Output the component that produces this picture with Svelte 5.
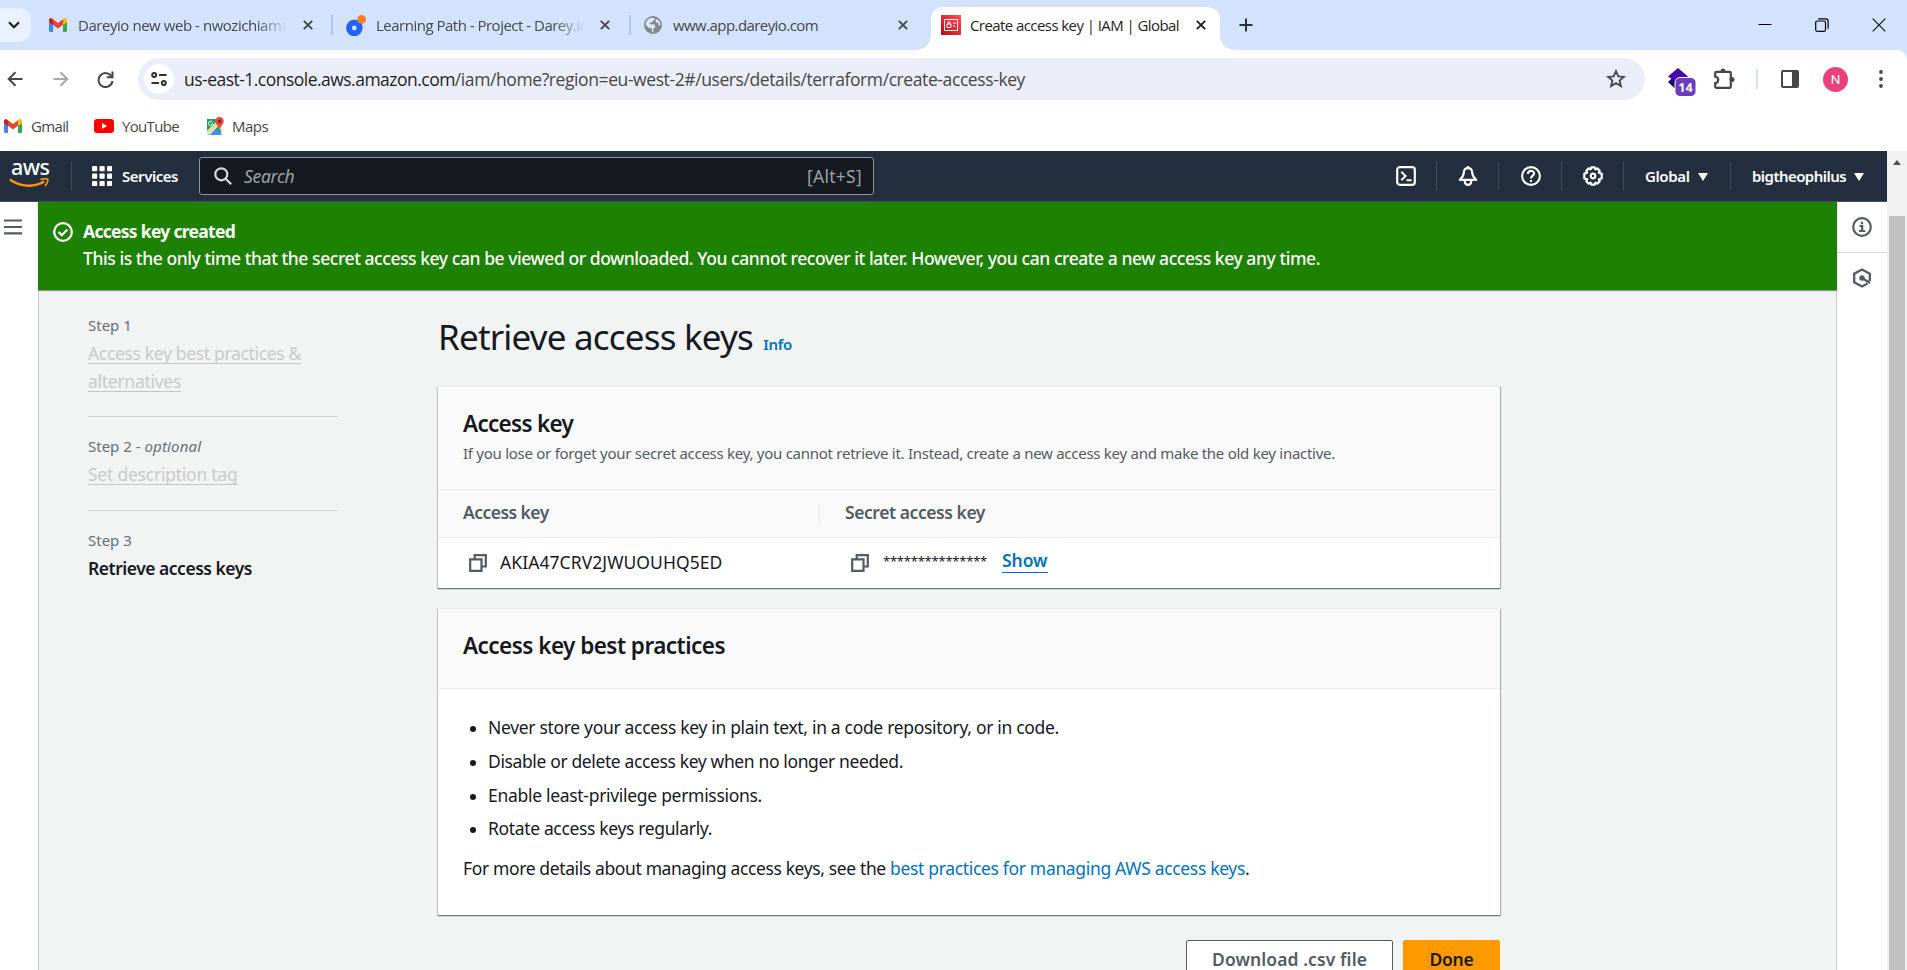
<script>
  const tabs = [
    { icon: 'gmail', title: 'Dareyio new web - nwozichiamaka', ls: -0.45, fade: true },
    { icon: 'darey', title: 'Learning Path - Project - Darey.io', ls: -0.5, fade: true },
    { icon: 'globe', title: 'www.app.dareyio.com', ls: -0.57, fade: false }
  ];
  const tips = [
    { text: 'Never store your access key in plain text, in a code repository, or in code.', ls: -0.32 },
    { text: 'Disable or delete access key when no longer needed.', ls: -0.376 },
    { text: 'Enable least-privilege permissions.', ls: -0.302 },
    { text: 'Rotate access keys regularly.', ls: -0.351 }
  ];
</script>

{#snippet gmail()}
  <svg width="18" height="14" viewBox="0 0 18 14">
    <path d="M0 2v10.8C0 13.500.500 14 1.200 14H4V6z" fill="#4285f4" />
    <path d="M18 2v10.800c0 .700-.500 1.200-1.200 1.200H14V6z" fill="#34a853" />
    <path d="M4 1.200v5.600l5 3.800 5-3.800V1.200L9 5z" fill="#ea4335" />
    <path d="M0 2v2l4 3V1.200L2.900.4C1.700-.5 0 .400 0 2z" fill="#c5221f" />
    <path d="M18 2v2l-4 3V1.200l1.100-.8C16.300-.500 18 .400 18 2z" fill="#fbbc04" />
  </svg>
{/snippet}

{#snippet cross()}
  <svg class="cross" width="10" height="10" viewBox="0 0 10 10"><path d="M.8.800l8.400 8.400M9.200.800L.8 9.200" fill="none" stroke="currentColor" stroke-width="1.900" /></svg>
{/snippet}

{#snippet copy()}
  <svg width="18" height="18" viewBox="0 0 18 18" fill="none" stroke="#545b64" stroke-width="2.200"><path d="M1.200 5.300h11.300v11.500H1.200z" /><path d="M5.700 5V1.200h11.100v11.300h-4" /></svg>
{/snippet}

<div class="window">
  <div class="tabstrip">
    <div class="tabsearch">
      <svg width="12" height="8" viewBox="0 0 12 8"><path d="M1 1.200l5 5 5-5" fill="none" stroke="#1f1f1f" stroke-width="2.200" /></svg>
    </div>
    {#each tabs as t}
      <div class="tab {t.icon}">
        <span class="fav">
          {#if t.icon === 'gmail'}{@render gmail()}
          {:else if t.icon === 'darey'}
            <svg width="20" height="21" viewBox="0 0 20 21"><circle cx="8.300" cy="13" r="5.300" fill="none" stroke="#1f62f5" stroke-width="5.800" /><path d="M11.500 4.800l4.700-.8v9h-4.700z" fill="#1f62f5" /><circle cx="15.600" cy="4.400" r="4.400" fill="#fd7e23" /></svg>
          {:else}
            <svg width="18" height="18" viewBox="0 0 18 18"><circle cx="9" cy="9" r="9" fill="#84878b" /><path d="M8 1.800c-3.600.4-6.300 3.300-6.300 7l3.500 3.400H8v3.700c.5.300 1 .3 1.500.3l-.2-3.400 2.200-1.700-1-2.500-4.700-.4V6.500h2.400l1-2.200 1.800-.8V2.200zM12.500 3l-1.300 1.800 1.500 2h1.600l.5 3 1.700-.8c0-2.600-1.500-4.900-4-6z" fill="#dce7fb" /></svg>
          {/if}
        </span>
        <span class="title" class:fade={t.fade} style:letter-spacing="{t.ls}px">{t.title}</span>
        {@render cross()}
      </div>
    {/each}
    <div class="tab active">
      <span class="fav">
        <svg width="20" height="20" viewBox="0 0 20 20"><defs><linearGradient id="iam" x1="0" y1="1" x2="1" y2="0"><stop offset="0" stop-color="#bd0816" /><stop offset="1" stop-color="#ff5252" /></linearGradient></defs><path d="M0 0h20v20H0z" fill="url(#iam)" /><g fill="none" stroke="#fff"><path d="M3.500 4.500h13v11h-13z" /><path d="M6 9h4v3.500H6zM7 9V7h2v2M12 8h3M12 11h2" /></g></svg>
      </span>
      <span class="title">Create access key | IAM | Global</span>
      {@render cross()}
    </div>
    <svg class="plus" width="14" height="14" viewBox="0 0 14 14"><path d="M7 .5v13M.5 7h13" stroke="#303134" stroke-width="2" /></svg>
    <div class="winctl">
      <svg width="14" height="14" viewBox="0 0 14 14"><path d="M.5 6.500h13" stroke="#000" /></svg>
      <svg width="14" height="14" viewBox="0 0 14 14" fill="none" stroke="#000" stroke-width="1.200"><rect x=".7" y="3" width="9.800" height="10.300" rx="1.500" /><path d="M3.200.8h7.500c1.500 0 2.400.9 2.400 2.400v7.500" /></svg>
      <svg width="14" height="14" viewBox="0 0 14 14"><path d="M.7.700l12.600 12.600M13.300.7L.7 13.300" stroke="#111" stroke-width="1.200" /></svg>
    </div>
  </div>

  <div class="toolbarwrap">
    <div class="toolbar">
      <svg width="16" height="16" viewBox="0 0 16 16" fill="none" stroke="#474747" stroke-width="2"><path d="M15.500 8H2M8.500 1.200L1.700 8l6.800 6.800" /></svg>
      <svg class="fwd" width="16" height="16" viewBox="0 0 16 16" fill="none" stroke="#a9a9a9" stroke-width="2"><path d="M.5 8H14M7.500 1.200L14.300 8l-6.800 6.800" /></svg>
      <svg class="reload" width="17" height="17" viewBox="0 0 17 17" fill="none" stroke="#474747" stroke-width="2"><path d="M14.700 5.700A7 7 0 1 0 15.500 10" /><path d="M15.500.5v5.700H9.800" /></svg>
      <div class="omnibox">
        <span class="site"><svg width="16" height="14" viewBox="0 0 16 14" fill="none" stroke="#303134" stroke-width="2"><circle cx="3.200" cy="3" r="2" /><path d="M8 3h7.500M.5 11H8" /><circle cx="12.800" cy="11" r="2" /></svg></span>
        <span class="url"><b>us-east-1.console.aws.amazon.com</b>/iam/home?region=eu-west-2#/users/details/terraform/create-access-key</span>
        <svg class="star" width="20" height="20" viewBox="0 0 20 20"><path d="M10 2.200l2.300 5.200 5.600.5-4.300 3.700 1.300 5.500-4.900-2.900-4.900 2.900 1.300-5.500L2.100 7.900l5.600-.5z" fill="none" stroke="#474747" stroke-width="1.900" /></svg>
      </div>
      <svg class="ext" width="30" height="30" viewBox="0 0 30 30"><path d="M0 14l9-8.500 9 8.500-9 8.500z" fill="#1e0a66" /><path d="M0 8.500L10 0l10 8.500L10 15z" fill="#4c05ad" /><rect x="7" y="9.500" width="21" height="19" rx="5" fill="#6c3bc0" stroke="#fff" /><text x="17.500" y="24" text-anchor="middle" font-family="Open Sans" font-size="12.500" font-weight="700" fill="#fff">14</text></svg>
      <svg class="puzzle" width="22" height="22" viewBox="0 0 22 22"><path d="M2.200 4.800c0-.6.400-1 1-1h13.600c.6 0 1 .4 1 1v14c0 .6-.4 1-1 1H3.200c-.6 0-1-.4-1-1v-3.600c2-.4 3-1.600 3-3.300s-1-3-3-3.400z" fill="none" stroke="#474747" stroke-width="2.200" /><circle cx="10" cy="2.800" r="2.400" fill="#474747" /><circle cx="19" cy="11.500" r="2.500" fill="#474747" /></svg>
      <i class="vsep"></i>
      <svg class="panel" width="18" height="18" viewBox="0 0 18 18"><rect x="1" y="1" width="16" height="16" rx="1" fill="none" stroke="#474747" stroke-width="2" /><path d="M11 1h6v16h-6z" fill="#474747" /></svg>
      <span class="avatar">N</span>
      <svg class="dots" width="4" height="18" viewBox="0 0 4 18" fill="#474747"><circle cx="2" cy="2" r="1.900" /><circle cx="2" cy="9" r="1.900" /><circle cx="2" cy="16" r="1.900" /></svg>
    </div>
  </div>

  <div class="bookmarks">
    {@render gmail()}<span class="b1">Gmail</span>
    <svg width="20" height="14" viewBox="0 0 20 14"><rect width="20" height="14" rx="3.300" fill="#f00" /><path d="M8 4l5.200 3L8 10z" fill="#fff" /></svg><span class="b2">YouTube</span>
    <svg width="20" height="18" viewBox="0 0 20 18"><path d="M2 2h14v14H2z" fill="#1fa463" /><path d="M9 9l8 9H2z" fill="#4b8df8" /><path d="M2 14L14 2l3 3L5 17.500H2z" fill="#fff" opacity=".85" /><path d="M2 15.500L14 4l1 2-12 11z" fill="#fddb4c" /><path d="M12 8l5 8V6z" fill="#d5d9dd" /><path d="M14.500 0a4.200 4.200 0 0 0-4.200 4.200c0 3 3 4 4.200 8.200 1.200-4.200 4.200-5.200 4.200-8.200A4.200 4.200 0 0 0 14.500 0z" fill="#e8453c" /><circle cx="14.500" cy="4.300" r="1.500" fill="#801f1a" /><path d="M7.500 5.300A2.200 2.200 0 1 0 7.800 7H6" stroke="#fff" fill="none" /></svg><span class="b3">Maps</span>
  </div>

  <div class="page">
    <div class="view">
      <header class="aws">
        <div class="logo"><span>aws</span><svg width="41" height="11" viewBox="0 0 41 11"><path d="M.8 1.500c11 7.600 24 8.100 34.500 2" fill="none" stroke="#f90" stroke-width="2.400" /><path d="M31.500 1.700c2.500-.9 6-1.200 7.200-.5.500 1.500-.8 4.500-2.500 6.800" fill="none" stroke="#f90" stroke-width="1.700" /></svg></div>
        <i></i>
        <svg class="grid" width="20" height="20" viewBox="0 0 20 20" fill="#fff">{#each [0, 7.500, 15] as gy}{#each [0, 7.500, 15] as gx}<rect x={gx} y={gy} width="5.200" height="5.200" rx="1" />{/each}{/each}</svg>
        <span class="services">Services</span>
        <div class="search">
          <svg width="18" height="18" viewBox="0 0 18 18" fill="none" stroke="#d5dbdb" stroke-width="2.200"><circle cx="7.300" cy="7.300" r="6" /><path d="M11.700 11.700l5.500 5.500" /></svg>
          <em>Search</em><span>[Alt+S]</span>
        </div>
        <div class="tools">
          <svg width="20" height="20" viewBox="0 0 20 20" fill="none" stroke="#fff" stroke-width="2.200"><rect x="1.200" y="1.200" width="17.600" height="17.600" rx="2.500" /><path d="M5.300 5.800L9.500 10l-4.200 4.200M10.500 14.300h5" stroke-width="2" /></svg>
          <i></i>
          <svg width="20" height="20" viewBox="0 0 20 20" fill="none" stroke="#fff" stroke-width="2.200"><path d="M10 2.200C7.200 2.200 6 4 5.800 6.500 5.600 10 4.800 11.300 1.700 13.800h16.600c-3.100-2.500-3.900-3.800-4.100-7.300C14 4 12.800 2.200 10 2.200z" stroke-linejoin="round" /><path d="M10 0v2" /><path d="M6.800 14.500c0 5.900 6.400 5.900 6.400 0" /></svg>
          <i></i>
          <svg width="20" height="20" viewBox="0 0 20 20" fill="none" stroke="#fff" stroke-width="2.100"><circle cx="10" cy="10" r="8.900" /><path d="M6.900 8c0-4.100 6.200-4.100 6.200-.5 0 2-3.100 2.300-3.100 5" /><path d="M10 14v2" /></svg>
          <i></i>
          <svg width="20" height="20" viewBox="0 0 20 20" fill="none" stroke="#fff" stroke-width="2.200"><path d="M8.300 1.300h3.400l.7 2 2-.9 2.300 2.300-.9 2 2.900.9v4.800l-2.900.9.900 2-2.300 2.300-2-.9-.7 2H8.300l-.7-2-2 .9-2.300-2.300.9-2-2.900-.9V7.600l2.900-.9-.9-2 2.300-2.300 2 .9z" stroke-linejoin="round" /><circle cx="10" cy="10" r="2.300" /></svg>
          <i></i>
          <span class="global">Global</span><b></b>
          <i></i>
          <span class="user">bigtheophilus</span><b></b>
        </div>
      </header>

      <div class="body">
        <aside class="leftbar"><svg width="18" height="16" viewBox="0 0 18 16"><path d="M0 1.500h18M0 8h18M0 14.300h18" stroke="#545b64" stroke-width="2.200" /></svg></aside>

        <div class="center">
          <div class="flash">
            <svg width="20" height="20" viewBox="0 0 20 20" fill="none" stroke="#fff" stroke-width="2.300"><circle cx="10" cy="10" r="8.800" /><path d="M5.500 10l3.300 3.200 5.600-5.700" /></svg>
            <div><strong>Access key created</strong><p>This is the only time that the secret access key can be viewed or downloaded. You cannot recover it later. However, you can create a new access key any time.</p></div>
          </div>

          <div class="content">
            <nav>
              <div class="step s1"><small>Step 1</small><div><u>Access key best practices &amp;</u><br /><u class="alt">alternatives</u></div></div>
              <div class="step s2"><small>Step 2 - <em>optional</em></small><div><u class="desc">Set description tag</u></div></div>
              <div class="step s3"><small>Step 3</small><div><strong>Retrieve access keys</strong></div></div>
            </nav>
            <main>
              <h1>Retrieve access keys <a href="#info">Info</a></h1>
              <section class="card keys">
                <div class="head"><h2 class="k">Access key</h2><p>If you lose or forget your secret access key, you cannot retrieve it. Instead, create a new access key and make the old key inactive.</p></div>
                <div class="cols"><span class="c1">Access key</span><span class="c2">Secret access key</span></div>
                <div class="vals">
                  <div class="v1">{@render copy()}<span>AKIA47CRV2JWUOUHQ5ED</span></div>
                  <div class="v2">{@render copy()}<span class="stars">***************</span><a href="#show">Show</a></div>
                </div>
              </section>
              <section class="card best">
                <div class="head"><h2>Access key best practices</h2></div>
                <ul>{#each tips as t}<li style:letter-spacing="{t.ls}px">{t.text}</li>{/each}</ul>
                <p>For more details about managing access keys, see the <a href="#best">best practices for managing AWS access keys</a>.</p>
              </section>
              <div class="actions"><button class="csv">Download .csv file</button><button class="done">Done</button></div>
            </main>
          </div>
        </div>

        <aside class="rightbar">
          <div><svg width="20" height="20" viewBox="0 0 20 20" fill="none" stroke="#545b64" stroke-width="2.200"><circle cx="10" cy="10" r="8.800" /><path d="M10 4.800v2.400M7.500 9h2.700v5M7 14h6.300" /></svg></div>
          <div><svg width="20" height="20" viewBox="0 0 20 20" fill="none" stroke="#545b64" stroke-width="2.300"><path d="M17.800 13V5.800L10 1.500 2.200 5.800v8.400l7.800 4.300 5.500-3" /><circle cx="10" cy="10" r="2.700" fill="#545b64" stroke="none" /><path d="M10 10l8 5" stroke-width="2.600" /></svg></div>
        </aside>
      </div>
    </div>
    <div class="scroll"><svg width="8" height="5" viewBox="0 0 8 5"><path d="M0 5l4-5 4 5z" fill="#505050" /></svg><div></div></div>
  </div>
</div>

<style>
  :global(body) { margin: 0; overflow: hidden; }
  * { box-sizing: border-box; }
  svg { display: block; flex: none; }
  p, h1, h2, ul { margin: 0; padding: 0; }
  .window { width: 1907px; height: 970px; overflow: hidden; display: flex; flex-direction: column; font-family: "Noto Sans", "Open Sans", sans-serif; font-size: 17.5px; color: #16191f; background: #fff; white-space: nowrap; }
  .tabstrip { height: 50px; flex: none; background: #d3e3fd; display: flex; align-items: center; font: 15px "Open Sans", sans-serif; color: #474747; }
  .tabsearch { width: 31px; height: 34px; border-radius: 0 12px 12px 0; background: #e9f1fe; display: flex; align-items: center; padding-left: 8px; margin-right: 18px; }
  .tab { display: flex; align-items: center; height: 50px; position: relative; }
  .tab.gmail { width: 297px; }
  .tab.darey { width: 298px; }
  .tab.globe { width: 277px; }
  .tab.gmail::after, .tab.darey::after { content: ""; position: absolute; right: 13px; top: 15px; width: 2px; height: 20px; background: #a8c7fa; }
  .fav { width: 29px; flex: none; }
  .darey .fav { width: 30px; }
  .title { width: 209px; overflow: hidden; line-height: 24px; }
  .globe .title { width: 221px; }
  .title.fade { -webkit-mask-image: linear-gradient(90deg, #000 178px, transparent 209px); mask-image: linear-gradient(90deg, #000 178px, transparent 209px); }
  .cross { margin-left: 16px; color: #474747; }
  .globe .cross { margin-left: 4px; }
  .darey .cross { margin-left: 15px; }
  .active { width: 289px; height: 43px; margin-top: 7px; margin-left: 10px; padding: 0 0 7px 10px; background: #fff; border-radius: 12px 12px 0 0; color: #1f1f1f; }
  .active .fav { width: 30px; }
  .active .title { letter-spacing: -0.575px; width: 211px; margin-left: -1px; }
  .active .cross { margin-left: 15px; color: #1f1f1f; }
  .active::before, .active::after { content: ""; position: absolute; bottom: 0; width: 14px; height: 14px; }
  .active::before { left: -14px; background: radial-gradient(circle at 0 0, transparent 13.500px, #fff 14px); }
  .active::after { right: -14px; background: radial-gradient(circle at 100% 0, transparent 13.500px, #fff 14px); }
  .plus { margin-left: 19px; }
  .winctl { margin-left: auto; display: flex; gap: 43px; padding-right: 21px; }

  .toolbarwrap { background: #d3e3fd; flex: none; }
  .toolbar { height: 58px; background: #fff; border-radius: 0 10px 0 0; display: flex; align-items: center; padding-left: 7px; }
  .fwd { margin-left: 30px; }
  .reload { margin-left: 28px; }
  .omnibox { margin-left: 24px; width: 1507px; height: 42px; border-radius: 21px; background: #ebeef8; display: flex; align-items: center; padding-left: 6px; font: 17.5px "Open Sans", sans-serif; color: #474747; }
  .site { width: 30px; height: 30px; border-radius: 50%; background: #fff; display: grid; place-items: center; }
  .url { margin-left: 10px; letter-spacing: -0.405px; padding-bottom: 1px; }
  .url b { font-weight: 400; color: #1f1f1f; letter-spacing: -0.52px; }
  .star { margin-left: auto; margin-right: 19px; }
  .ext { margin-left: 23px; margin-top: 8px; }
  .puzzle { margin-left: 15px; }
  .vsep { width: 2px; height: 20px; background: #d3e3fd; margin-left: 21px; }
  .panel { margin-left: 23px; }
  .avatar { width: 25px; height: 25px; border-radius: 50%; background: #ec407a; color: #fff; font: 13.500px/25px Roboto, sans-serif; text-align: center; margin-left: 24px; }
  .dots { margin-left: 31px; }

  .bookmarks { height: 43px; flex: none; display: flex; align-items: center; padding: 0 0 8px 4px; font: 15px "Open Sans", sans-serif; color: #474747; }
  .bookmarks span { line-height: 20px; }
  .b1 { margin-left: 9px; width: 63px; letter-spacing: -0.64px; }
  .b2 { margin-left: 8px; width: 83px; letter-spacing: -0.667px; }
  .b3 { margin-left: 7px; letter-spacing: -0.54px; }

  .page { flex: 1; display: flex; min-height: 0; }
  .view { width: 1887px; display: flex; flex-direction: column; }
  .scroll { width: 20px; background: #f1f1f1; padding: 9px 2px 0; display: flex; flex-direction: column; align-items: center; }
  .scroll div { width: 16px; flex: 1; background: #c1c1c1; margin-top: 51px; }

  .aws { height: 51px; flex: none; background: #232f3e; border-bottom: 1px solid #414d5c; display: flex; align-items: center; color: #fff; font-size: 15px; font-weight: 600; }
  .aws i { width: 1px; height: 28px; background: #414d5c; }
  .logo { width: 71px; padding-left: 9px; }
  .logo span { display: block; font: 500 21.500px/20px "Noto Sans", sans-serif; letter-spacing: -0.6px; height: 17px; margin-top: -6px; padding-left: 2px; }
  .logo svg { margin-top: 4px; }
  .grid { margin-left: 20px; }
  .services { margin-left: 10px; width: 77px; letter-spacing: -0.46px; }
  .search { width: 675px; height: 38px; border: 1px solid #879596; border-radius: 3px; background: #161920; display: flex; align-items: center; padding: 0 11px 1px 14px; font-size: 17.5px; font-weight: 400; color: #95a5a6; }
  .search em { margin-left: 12px; letter-spacing: -0.3px; }
  .search span { margin-left: auto; letter-spacing: 0.26px; }
  .tools { margin-left: auto; width: 491px; display: flex; align-items: center; }
  .tools i { margin: 0 21px 0 20px; }
  .tools i:nth-of-type(2) { margin-right: 22px; }
  .tools b { border: 5.500px solid transparent; border-top: 8.500px solid #fff; border-bottom: 0; margin: 1px 0 0 8px; }
  .tools i:nth-of-type(5) { margin-left: 22px; }
  .global { letter-spacing: -0.383px; width: 45px; }
  .user { letter-spacing: -0.549px; width: 94px; }

  .body { flex: 1; display: flex; min-height: 0; }
  .leftbar { width: 38px; padding: 17px 0 0 4px; background: #fff; }
  .center { width: 1799px; display: flex; flex-direction: column; min-height: 0; }
  .flash { height: 88px; flex: none; background: #1d8102; color: #fff; display: flex; padding: 20px 0 0 15px; box-shadow: 0 1px 1px #8e9699; line-height: 27.500px; position: relative; }
  .flash div { margin: -4px 0 0 10px; }
  .flash strong { display: block; letter-spacing: -0.709px; }
  .flash p { font-weight: 500; letter-spacing: -0.437px; margin-top: -1px; }
  .rightbar { width: 50px; background: #fff; }
  .rightbar div { height: 51px; padding: 15px 0 0 15px; }
  .rightbar div:first-child { border-bottom: 1px solid #d5dbdb; }

  .content { display: flex; flex: 1; min-height: 0; padding: 23px 0 0 49px; background: #f2f3f3; border: solid #c6cbcb; border-width: 0 1px; }
  nav { width: 251px; line-height: 27.500px; padding-right: 1px; }
  .step { border-bottom: 1px solid #d1d5d6; }
  .step small { display: block; font-size: 15px; color: #687078; height: 27px; line-height: 24px; letter-spacing: 0; }
  .step small em { letter-spacing: 0.15px; }
  .step u { text-decoration: none; border-bottom: 1px solid #c4c7c8; color: #cbcbcb; letter-spacing: -0.337px; display: inline-block; height: 24px; line-height: 27px; margin-bottom: 4px; vertical-align: top; }
  .step .alt { letter-spacing: -0.28px; }
  .step .desc { letter-spacing: -0.234px; }
  .s1 { height: 104px; }
  .s2 { height: 94px; padding-top: 17px; }
  .s3 { padding-top: 17px; border: 0; }
  .s3 strong { font-weight: 600; letter-spacing: -0.482px; }

  main { width: 1062px; margin-left: 99px; }
  a { color: #0073bb; text-decoration: none; }
  h1 { font-size: 35px; font-weight: 400; letter-spacing: -0.812px; line-height: 48px; height: 73px; }
  h1 a { font-size: 15px; font-weight: 600; letter-spacing: -0.36px; margin-left: 2px; }
  .card { background: #fff; box-shadow: 0 1px 1px #6f7c7d, 1px 1px 1px #b5bcbc, -1px 1px 1px #d0d5d5; margin-bottom: 20px; border-top: 1px solid #eaeded; }
  .head { background: #fafafa; border-bottom: 1px solid #eaeded; padding: 22px 25px 0; }
  .keys { height: 202px; }
  .keys .head { height: 103px; }
  h2 { font-size: 22.5px; font-weight: 600; line-height: 30px; letter-spacing: -0.531px; }
  h2.k { letter-spacing: -0.718px; }
  .head p { font-size: 15px; color: #545b64; letter-spacing: -0.27px; line-height: 25px; margin-top: 2px; }
  .cols { height: 48px; background: #fafafa; border-bottom: 1px solid #eaeded; display: flex; align-items: center; color: #545b64; font-weight: 600; }
  .c1 { width: 382px; height: 26px; line-height: 23px; padding-left: 25px; border-right: 1px solid #eaeded; letter-spacing: -0.54px; }
  .c2 { line-height: 23px; height: 26px; padding-left: 25px; letter-spacing: -0.435px; }
  .vals { height: 49px; display: flex; align-items: center; }
  .vals > div { display: flex; align-items: center; }
  .v1 { width: 413px; padding-left: 31px; }
  .v1 span { margin-left: 13px; letter-spacing: 0.07px; padding-bottom: 1px; }
  .vals svg { margin-top: 1px; }
  .stars { font-size: 13px; letter-spacing: -0.23px; margin-left: 14px; width: 119px; padding-bottom: 3px; }
  .v2 a { font-weight: 600; border-bottom: 1px solid #0073bb; height: 22px; line-height: 19px; letter-spacing: -0.066px; margin-top: -1px; }
  .best { height: 307px; margin-bottom: 25px; }
  .best .head { height: 80px; }
  ul { list-style: none; padding: 22px 0 0 35px; }
  li { height: 33.800px; line-height: 32px; padding-left: 15px; position: relative; }
  li::before { content: ""; position: absolute; left: -3px; top: 15px; width: 6px; height: 6px; border-radius: 50%; background: #16191f; }
  .best > p { padding: 8px 0 0 25px; line-height: 28px; letter-spacing: -0.376px; }
  .best > p a { letter-spacing: -0.332px; }
  .actions { display: flex; justify-content: flex-end; gap: 10px; }
  button { height: 40px; padding: 0 0 3px; font: 600 17.500px "Noto Sans", sans-serif; border-radius: 2px; }
  .csv { width: 207px; background: #fff; border: 1px solid #545b64; color: #545b64; letter-spacing: 0.087px; }
  .done { width: 97px; background: #f90; border: 1px solid #f90; color: #16191f; letter-spacing: -0.252px; }
</style>
